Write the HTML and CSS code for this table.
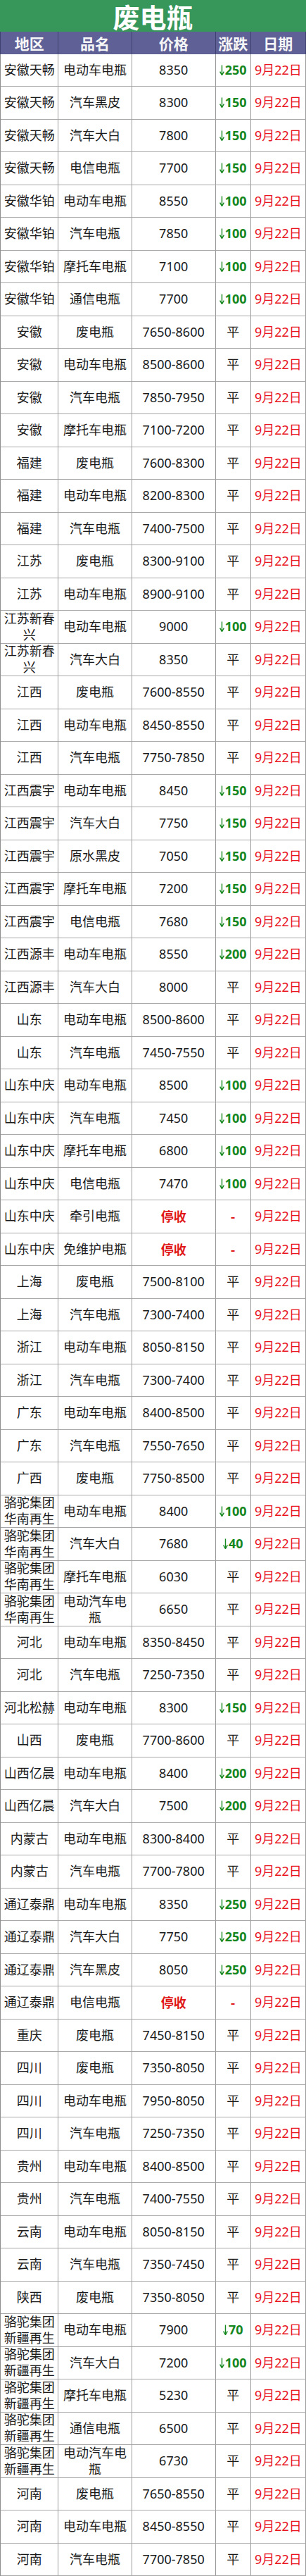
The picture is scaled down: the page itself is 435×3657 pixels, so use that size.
FILE: index.html
```html
<!DOCTYPE html>
<html lang="zh-CN">
<head>
<meta charset="utf-8">
<title>废电瓶</title>
<link rel="stylesheet" href="styles.css">
</head>
<body>
<svg class="defs" width="0" height="0" aria-hidden="true">
  <symbol id="arr" viewBox="0 0 7 15">
    <path d="M3.5 0.5V13.6" stroke="currentColor" stroke-width="1.4" fill="none"/>
    <path d="M0.6 9.6L3.5 14.6L6.4 9.6" stroke="currentColor" stroke-width="1.4" fill="none" stroke-linejoin="miter"/>
  </symbol>
</svg>
<div class="sheet">
  <div class="title">废电瓶</div>
  <div class="grid head">
    <div class="h">地区</div><div class="h">品名</div><div class="h">价格</div><div class="h">涨跌</div><div class="h">日期</div>
  </div>
  <div class="grid body">
    <div class="c">安徽天畅</div><div class="c">电动车电瓶</div><div class="c">8350</div><div class="c dn"><svg class="a"><use href="#arr"/></svg>250</div><div class="c dt">9月22日</div>
    <div class="c">安徽天畅</div><div class="c">汽车黑皮</div><div class="c">8300</div><div class="c dn"><svg class="a"><use href="#arr"/></svg>150</div><div class="c dt">9月22日</div>
    <div class="c">安徽天畅</div><div class="c">汽车大白</div><div class="c">7800</div><div class="c dn"><svg class="a"><use href="#arr"/></svg>150</div><div class="c dt">9月22日</div>
    <div class="c">安徽天畅</div><div class="c">电信电瓶</div><div class="c">7700</div><div class="c dn"><svg class="a"><use href="#arr"/></svg>150</div><div class="c dt">9月22日</div>
    <div class="c">安徽华铂</div><div class="c">电动车电瓶</div><div class="c">8550</div><div class="c dn"><svg class="a"><use href="#arr"/></svg>100</div><div class="c dt">9月22日</div>
    <div class="c">安徽华铂</div><div class="c">汽车电瓶</div><div class="c">7850</div><div class="c dn"><svg class="a"><use href="#arr"/></svg>100</div><div class="c dt">9月22日</div>
    <div class="c">安徽华铂</div><div class="c">摩托车电瓶</div><div class="c">7100</div><div class="c dn"><svg class="a"><use href="#arr"/></svg>100</div><div class="c dt">9月22日</div>
    <div class="c">安徽华铂</div><div class="c">通信电瓶</div><div class="c">7700</div><div class="c dn"><svg class="a"><use href="#arr"/></svg>100</div><div class="c dt">9月22日</div>
    <div class="c">安徽</div><div class="c">废电瓶</div><div class="c">7650-8600</div><div class="c">平</div><div class="c dt">9月22日</div>
    <div class="c">安徽</div><div class="c">电动车电瓶</div><div class="c">8500-8600</div><div class="c">平</div><div class="c dt">9月22日</div>
    <div class="c">安徽</div><div class="c">汽车电瓶</div><div class="c">7850-7950</div><div class="c">平</div><div class="c dt">9月22日</div>
    <div class="c">安徽</div><div class="c">摩托车电瓶</div><div class="c">7100-7200</div><div class="c">平</div><div class="c dt">9月22日</div>
    <div class="c">福建</div><div class="c">废电瓶</div><div class="c">7600-8300</div><div class="c">平</div><div class="c dt">9月22日</div>
    <div class="c">福建</div><div class="c">电动车电瓶</div><div class="c">8200-8300</div><div class="c">平</div><div class="c dt">9月22日</div>
    <div class="c">福建</div><div class="c">汽车电瓶</div><div class="c">7400-7500</div><div class="c">平</div><div class="c dt">9月22日</div>
    <div class="c">江苏</div><div class="c">废电瓶</div><div class="c">8300-9100</div><div class="c">平</div><div class="c dt">9月22日</div>
    <div class="c">江苏</div><div class="c">电动车电瓶</div><div class="c">8900-9100</div><div class="c">平</div><div class="c dt">9月22日</div>
    <div class="c">江苏新春兴</div><div class="c">电动车电瓶</div><div class="c">9000</div><div class="c dn"><svg class="a"><use href="#arr"/></svg>100</div><div class="c dt">9月22日</div>
    <div class="c">江苏新春兴</div><div class="c">汽车大白</div><div class="c">8350</div><div class="c">平</div><div class="c dt">9月22日</div>
    <div class="c">江西</div><div class="c">废电瓶</div><div class="c">7600-8550</div><div class="c">平</div><div class="c dt">9月22日</div>
    <div class="c">江西</div><div class="c">电动车电瓶</div><div class="c">8450-8550</div><div class="c">平</div><div class="c dt">9月22日</div>
    <div class="c">江西</div><div class="c">汽车电瓶</div><div class="c">7750-7850</div><div class="c">平</div><div class="c dt">9月22日</div>
    <div class="c">江西震宇</div><div class="c">电动车电瓶</div><div class="c">8450</div><div class="c dn"><svg class="a"><use href="#arr"/></svg>150</div><div class="c dt">9月22日</div>
    <div class="c">江西震宇</div><div class="c">汽车大白</div><div class="c">7750</div><div class="c dn"><svg class="a"><use href="#arr"/></svg>150</div><div class="c dt">9月22日</div>
    <div class="c">江西震宇</div><div class="c">原水黑皮</div><div class="c">7050</div><div class="c dn"><svg class="a"><use href="#arr"/></svg>150</div><div class="c dt">9月22日</div>
    <div class="c">江西震宇</div><div class="c">摩托车电瓶</div><div class="c">7200</div><div class="c dn"><svg class="a"><use href="#arr"/></svg>150</div><div class="c dt">9月22日</div>
    <div class="c">江西震宇</div><div class="c">电信电瓶</div><div class="c">7680</div><div class="c dn"><svg class="a"><use href="#arr"/></svg>150</div><div class="c dt">9月22日</div>
    <div class="c">江西源丰</div><div class="c">电动车电瓶</div><div class="c">8550</div><div class="c dn"><svg class="a"><use href="#arr"/></svg>200</div><div class="c dt">9月22日</div>
    <div class="c">江西源丰</div><div class="c">汽车大白</div><div class="c">8000</div><div class="c">平</div><div class="c dt">9月22日</div>
    <div class="c">山东</div><div class="c">电动车电瓶</div><div class="c">8500-8600</div><div class="c">平</div><div class="c dt">9月22日</div>
    <div class="c">山东</div><div class="c">汽车电瓶</div><div class="c">7450-7550</div><div class="c">平</div><div class="c dt">9月22日</div>
    <div class="c">山东中庆</div><div class="c">电动车电瓶</div><div class="c">8500</div><div class="c dn"><svg class="a"><use href="#arr"/></svg>100</div><div class="c dt">9月22日</div>
    <div class="c">山东中庆</div><div class="c">汽车电瓶</div><div class="c">7450</div><div class="c dn"><svg class="a"><use href="#arr"/></svg>100</div><div class="c dt">9月22日</div>
    <div class="c">山东中庆</div><div class="c">摩托车电瓶</div><div class="c">6800</div><div class="c dn"><svg class="a"><use href="#arr"/></svg>100</div><div class="c dt">9月22日</div>
    <div class="c">山东中庆</div><div class="c">电信电瓶</div><div class="c">7470</div><div class="c dn"><svg class="a"><use href="#arr"/></svg>100</div><div class="c dt">9月22日</div>
    <div class="c">山东中庆</div><div class="c">牵引电瓶</div><div class="c stop">停收</div><div class="c stop">-</div><div class="c dt">9月22日</div>
    <div class="c">山东中庆</div><div class="c">免维护电瓶</div><div class="c stop">停收</div><div class="c stop">-</div><div class="c dt">9月22日</div>
    <div class="c">上海</div><div class="c">废电瓶</div><div class="c">7500-8100</div><div class="c">平</div><div class="c dt">9月22日</div>
    <div class="c">上海</div><div class="c">汽车电瓶</div><div class="c">7300-7400</div><div class="c">平</div><div class="c dt">9月22日</div>
    <div class="c">浙江</div><div class="c">电动车电瓶</div><div class="c">8050-8150</div><div class="c">平</div><div class="c dt">9月22日</div>
    <div class="c">浙江</div><div class="c">汽车电瓶</div><div class="c">7300-7400</div><div class="c">平</div><div class="c dt">9月22日</div>
    <div class="c">广东</div><div class="c">电动车电瓶</div><div class="c">8400-8500</div><div class="c">平</div><div class="c dt">9月22日</div>
    <div class="c">广东</div><div class="c">汽车电瓶</div><div class="c">7550-7650</div><div class="c">平</div><div class="c dt">9月22日</div>
    <div class="c">广西</div><div class="c">废电瓶</div><div class="c">7750-8500</div><div class="c">平</div><div class="c dt">9月22日</div>
    <div class="c">骆驼集团华南再生</div><div class="c">电动车电瓶</div><div class="c">8400</div><div class="c dn"><svg class="a"><use href="#arr"/></svg>100</div><div class="c dt">9月22日</div>
    <div class="c">骆驼集团华南再生</div><div class="c">汽车大白</div><div class="c">7680</div><div class="c dn"><svg class="a"><use href="#arr"/></svg>40</div><div class="c dt">9月22日</div>
    <div class="c">骆驼集团华南再生</div><div class="c">摩托车电瓶</div><div class="c">6030</div><div class="c">平</div><div class="c dt">9月22日</div>
    <div class="c">骆驼集团华南再生</div><div class="c">电动汽车电瓶</div><div class="c">6650</div><div class="c">平</div><div class="c dt">9月22日</div>
    <div class="c">河北</div><div class="c">电动车电瓶</div><div class="c">8350-8450</div><div class="c">平</div><div class="c dt">9月22日</div>
    <div class="c">河北</div><div class="c">汽车电瓶</div><div class="c">7250-7350</div><div class="c">平</div><div class="c dt">9月22日</div>
    <div class="c">河北松赫</div><div class="c">电动车电瓶</div><div class="c">8300</div><div class="c dn"><svg class="a"><use href="#arr"/></svg>150</div><div class="c dt">9月22日</div>
    <div class="c">山西</div><div class="c">废电瓶</div><div class="c">7700-8600</div><div class="c">平</div><div class="c dt">9月22日</div>
    <div class="c">山西亿晨</div><div class="c">电动车电瓶</div><div class="c">8400</div><div class="c dn"><svg class="a"><use href="#arr"/></svg>200</div><div class="c dt">9月22日</div>
    <div class="c">山西亿晨</div><div class="c">汽车大白</div><div class="c">7500</div><div class="c dn"><svg class="a"><use href="#arr"/></svg>200</div><div class="c dt">9月22日</div>
    <div class="c">内蒙古</div><div class="c">电动车电瓶</div><div class="c">8300-8400</div><div class="c">平</div><div class="c dt">9月22日</div>
    <div class="c">内蒙古</div><div class="c">汽车电瓶</div><div class="c">7700-7800</div><div class="c">平</div><div class="c dt">9月22日</div>
    <div class="c">通辽泰鼎</div><div class="c">电动车电瓶</div><div class="c">8350</div><div class="c dn"><svg class="a"><use href="#arr"/></svg>250</div><div class="c dt">9月22日</div>
    <div class="c">通辽泰鼎</div><div class="c">汽车大白</div><div class="c">7750</div><div class="c dn"><svg class="a"><use href="#arr"/></svg>250</div><div class="c dt">9月22日</div>
    <div class="c">通辽泰鼎</div><div class="c">汽车黑皮</div><div class="c">8050</div><div class="c dn"><svg class="a"><use href="#arr"/></svg>250</div><div class="c dt">9月22日</div>
    <div class="c">通辽泰鼎</div><div class="c">电信电瓶</div><div class="c stop">停收</div><div class="c stop">-</div><div class="c dt">9月22日</div>
    <div class="c">重庆</div><div class="c">废电瓶</div><div class="c">7450-8150</div><div class="c">平</div><div class="c dt">9月22日</div>
    <div class="c">四川</div><div class="c">废电瓶</div><div class="c">7350-8050</div><div class="c">平</div><div class="c dt">9月22日</div>
    <div class="c">四川</div><div class="c">电动车电瓶</div><div class="c">7950-8050</div><div class="c">平</div><div class="c dt">9月22日</div>
    <div class="c">四川</div><div class="c">汽车电瓶</div><div class="c">7250-7350</div><div class="c">平</div><div class="c dt">9月22日</div>
    <div class="c">贵州</div><div class="c">电动车电瓶</div><div class="c">8400-8500</div><div class="c">平</div><div class="c dt">9月22日</div>
    <div class="c">贵州</div><div class="c">汽车电瓶</div><div class="c">7400-7550</div><div class="c">平</div><div class="c dt">9月22日</div>
    <div class="c">云南</div><div class="c">电动车电瓶</div><div class="c">8050-8150</div><div class="c">平</div><div class="c dt">9月22日</div>
    <div class="c">云南</div><div class="c">汽车电瓶</div><div class="c">7350-7450</div><div class="c">平</div><div class="c dt">9月22日</div>
    <div class="c">陕西</div><div class="c">废电瓶</div><div class="c">7350-8050</div><div class="c">平</div><div class="c dt">9月22日</div>
    <div class="c">骆驼集团新疆再生</div><div class="c">电动车电瓶</div><div class="c">7900</div><div class="c dn"><svg class="a"><use href="#arr"/></svg>70</div><div class="c dt">9月22日</div>
    <div class="c">骆驼集团新疆再生</div><div class="c">汽车大白</div><div class="c">7200</div><div class="c dn"><svg class="a"><use href="#arr"/></svg>100</div><div class="c dt">9月22日</div>
    <div class="c">骆驼集团新疆再生</div><div class="c">摩托车电瓶</div><div class="c">5230</div><div class="c">平</div><div class="c dt">9月22日</div>
    <div class="c">骆驼集团新疆再生</div><div class="c">通信电瓶</div><div class="c">6500</div><div class="c">平</div><div class="c dt">9月22日</div>
    <div class="c">骆驼集团新疆再生</div><div class="c">电动汽车电瓶</div><div class="c">6730</div><div class="c">平</div><div class="c dt">9月22日</div>
    <div class="c">河南</div><div class="c">废电瓶</div><div class="c">7650-8550</div><div class="c">平</div><div class="c dt">9月22日</div>
    <div class="c">河南</div><div class="c">电动车电瓶</div><div class="c">8450-8550</div><div class="c">平</div><div class="c dt">9月22日</div>
    <div class="c">河南</div><div class="c">汽车电瓶</div><div class="c">7700-7850</div><div class="c">平</div><div class="c dt">9月22日</div>
  </div>
</div>
</body>
</html>
```
FILE: styles.css
```css
html, body {
  margin: 0;
  padding: 0;
  background: #ffffff;
}
.defs {
  position: absolute;
  width: 0;
  height: 0;
  overflow: hidden;
}
.sheet {
  width: 435px;
  font-family: "Noto Sans", "Noto Sans CJK SC", sans-serif;
  color: #1a1a1a;
}
.title {
  height: 45px;
  background: #37965a;
  color: #ffffff;
  font-family: "Noto Sans CJK SC", sans-serif;
  font-weight: 700;
  font-size: 38px;
  line-height: 45px;
  text-align: center;
}
.grid {
  display: grid;
  grid-template-columns: 82.3px 104.4px 119px 50px 78.3px;
  border-left: 1px solid #8f8f8f;
}
.head {
  height: 31.7px;
  background: #5e6096;
  border-left-color: #3e4070;
}
.h {
  display: flex;
  align-items: center;
  justify-content: center;
  border-right: 1px solid #3e4070;
  color: #f6f6f6;
  font-family: "Noto Sans CJK SC", sans-serif;
  font-weight: 700;
  font-size: 21px;
}
.body {
  grid-auto-rows: 46.5px;
}
.c {
  box-sizing: border-box;
  display: flex;
  align-items: center;
  justify-content: center;
  text-align: center;
  padding: 0 1px;
  border-right: 1px solid #9c9c9c;
  border-bottom: 1px solid #a8a8a8;
  font-size: 18px;
  line-height: 23px;
  overflow: hidden;
  white-space: normal;
  word-break: break-all;
}
.dt {
  color: #e8141e;
}
.dn {
  color: #14861e;
  font-weight: 700;
  white-space: nowrap;
}
.a {
  width: 7px;
  height: 15px;
  margin-right: 1px;
  flex: none;
}
.stop {
  color: #e01515;
  font-weight: 700;
  font-family: "Noto Sans CJK SC", sans-serif;
}
```
